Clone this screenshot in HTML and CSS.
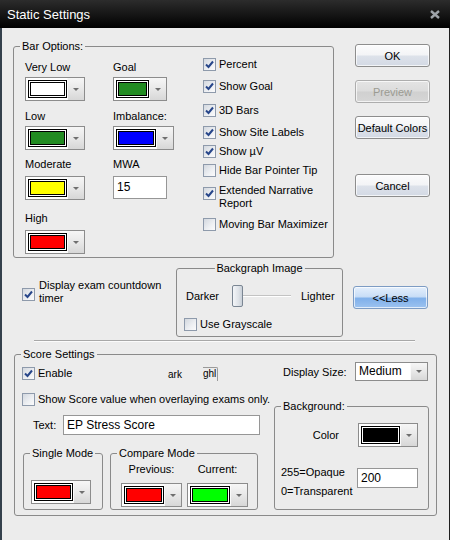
FILE: index.html
```html
<!DOCTYPE html>
<html>
<head>
<meta charset="utf-8">
<title>Static Settings</title>
<link rel="stylesheet" href="styles.css">
</head>
<body>
<div class="window">
  <div class="titlebar">
    <span class="title">Static Settings</span>
    <span class="close"><svg width="10" height="9" viewBox="0 0 10 9"><path d="M1 1L9 8M9 1L1 8" stroke="#9ea3a9" stroke-width="2.4" fill="none"/></svg></span>
  </div>
  <div class="client">
    <div class="row1">
      <div class="group bar-options">
        <span class="legend">Bar Options:</span>
        <div class="colors">
          <div class="field"><span class="lbl">Very Low</span><div class="combo w60"><span class="swatch c-white"></span><span class="drop"><i class="arrow"></i></span></div></div>
          <div class="field"><span class="lbl">Goal</span><div class="combo w54"><span class="swatch c-green"></span><span class="drop"><i class="arrow"></i></span></div></div>
          <div class="field"><span class="lbl">Low</span><div class="combo w60"><span class="swatch c-green"></span><span class="drop"><i class="arrow"></i></span></div></div>
          <div class="field"><span class="lbl">Imbalance:</span><div class="combo w61"><span class="swatch c-blue"></span><span class="drop"><i class="arrow"></i></span></div></div>
          <div class="field far"><span class="lbl">Moderate</span><div class="combo w60"><span class="swatch c-yellow"></span><span class="drop"><i class="arrow"></i></span></div></div>
          <div class="field far"><span class="lbl">MWA</span><div class="input mwa">15</div></div>
          <div class="field far"><span class="lbl">High</span><div class="combo w60"><span class="swatch c-red"></span><span class="drop"><i class="arrow"></i></span></div></div>
        </div>
        <div class="checks">
          <div class="check"><span class="cb"><svg width="11" height="11" viewBox="0 0 11 11"><path d="M2 5.5L4.5 8L9 2.5" stroke="#27468a" stroke-width="2" fill="none"/></svg></span><span>Percent</span></div>
          <div class="check"><span class="cb"><svg width="11" height="11" viewBox="0 0 11 11"><path d="M2 5.5L4.5 8L9 2.5" stroke="#27468a" stroke-width="2" fill="none"/></svg></span><span>Show Goal</span></div>
          <div class="check"><span class="cb"><svg width="11" height="11" viewBox="0 0 11 11"><path d="M2 5.5L4.5 8L9 2.5" stroke="#27468a" stroke-width="2" fill="none"/></svg></span><span>3D Bars</span></div>
          <div class="check"><span class="cb"><svg width="11" height="11" viewBox="0 0 11 11"><path d="M2 5.5L4.5 8L9 2.5" stroke="#27468a" stroke-width="2" fill="none"/></svg></span><span>Show Site Labels</span></div>
          <div class="check"><span class="cb"><svg width="11" height="11" viewBox="0 0 11 11"><path d="M2 5.5L4.5 8L9 2.5" stroke="#27468a" stroke-width="2" fill="none"/></svg></span><span>Show µV</span></div>
          <div class="check"><span class="cb"></span><span>Hide Bar Pointer Tip</span></div>
          <div class="check top"><span class="cb"><svg width="11" height="11" viewBox="0 0 11 11"><path d="M2 5.5L4.5 8L9 2.5" stroke="#27468a" stroke-width="2" fill="none"/></svg></span><span>Extended Narrative<br>Report</span></div>
          <div class="check"><span class="cb"></span><span>Moving Bar Maximizer</span></div>
        </div>
      </div>
      <div class="buttons">
        <div class="btn">OK</div>
        <div class="btn disabled">Preview</div>
        <div class="btn">Default Colors</div>
        <div class="btn cancel">Cancel</div>
      </div>
    </div>

    <div class="row2">
      <div class="countdown">
        <span class="cb"><svg width="11" height="11" viewBox="0 0 11 11"><path d="M2 5.5L4.5 8L9 2.5" stroke="#27468a" stroke-width="2" fill="none"/></svg></span>
        <span class="txt">Display exam countdown<br>timer</span>
      </div>
      <div class="group backgraph">
        <span class="legend center">Backgraph Image</span>
        <div class="slider-row">
          <span class="dark">Darker</span>
          <div class="slider"><span class="thumb"></span><span class="track"></span></div>
          <span class="light">Lighter</span>
        </div>
        <div class="gray-row"><span class="cb"></span><span>Use Grayscale</span></div>
      </div>
      <div class="btn less">&lt;&lt;Less</div>
    </div>

    <div class="separator"></div>

    <div class="group score">
      <span class="legend">Score Settings</span>
      <div class="score-left">
        <div class="enable-row">
          <span class="cb"><svg width="11" height="11" viewBox="0 0 11 11"><path d="M2 5.5L4.5 8L9 2.5" stroke="#27468a" stroke-width="2" fill="none"/></svg></span>
          <span class="enable-lbl">Enable</span>
          <span class="frag1">ark</span>
          <span class="frag2">ghl</span>
        </div>
        <div class="show-row"><span class="cb"></span><span>Show Score value when overlaying exams only.</span></div>
        <div class="text-row"><span class="text-lbl">Text:</span><div class="input text-input">EP Stress Score</div></div>
        <div class="modes">
          <div class="group single">
            <span class="legend">Single Mode</span>
            <div class="combo w60"><span class="swatch c-red"></span><span class="drop"><i class="arrow"></i></span></div>
          </div>
          <div class="group compare">
            <span class="legend">Compare Mode</span>
            <div class="col"><span class="lbl">Previous:</span><div class="combo w61"><span class="swatch c-red"></span><span class="drop"><i class="arrow"></i></span></div></div>
            <div class="col"><span class="lbl">Current:</span><div class="combo w61"><span class="swatch c-lime"></span><span class="drop"><i class="arrow"></i></span></div></div>
          </div>
        </div>
      </div>
      <div class="score-right">
        <div class="size-row">
          <span class="size-lbl">Display Size:</span>
          <div class="select"><span class="val">Medium</span><span class="drop"><i class="arrow"></i></span></div>
        </div>
        <div class="group background">
          <span class="legend">Background:</span>
          <div class="color-row">
            <span class="color-lbl">Color</span>
            <div class="combo w60"><span class="swatch c-black"></span><span class="drop"><i class="arrow"></i></span></div>
          </div>
          <div class="opacity-row">
            <div class="op-lbl">255=Opaque<br>0=Transparent</div>
            <div class="input op-input">200</div>
          </div>
        </div>
      </div>
    </div>
  </div>
</div>
</body>
</html>
```

FILE: styles.css
```css
* { box-sizing: border-box; }
html, body { margin: 0; padding: 0; }
body {
  width: 450px;
  height: 540px;
  overflow: hidden;
  font-family: "Liberation Sans", Arial, sans-serif;
  font-size: 11px;
  color: #000;
  background: #ececec;
}
.window {
  width: 450px;
  height: 540px;
  display: flex;
  flex-direction: column;
}
.titlebar {
  height: 28px;
  flex: none;
  display: flex;
  align-items: flex-start;
  background: linear-gradient(#2c2c2c, #141414 55%, #000);
  color: #fff;
}
.title {
  font-size: 13px;
  line-height: 22px;
  padding: 4px 0 0 7px;
}
.close {
  margin: 10px 10px 0 auto;
  display: flex;
}
.client {
  flex: 1;
  background: #ececec;
  border-left: 2px solid #35414c;
  border-right: 1px solid #1f1f1f;
  padding-left: 11px;
  display: flex;
  flex-direction: column;
  align-items: flex-start;
}

/* group boxes */
.group {
  position: relative;
  border: 1px solid #8a8a8a;
  border-radius: 3px;
}
.legend {
  position: absolute;
  top: -7px;
  left: 6px;
  padding: 0 2px;
  background: #ececec;
  line-height: 13px;
  white-space: nowrap;
}
.legend.center {
  left: 50%;
  transform: translateX(-50%);
}

/* row 1 */
.row1 {
  display: flex;
  align-items: flex-start;
  margin-top: 16px;
}
.bar-options {
  width: 321px;
  height: 212px;
  margin-top: 2px;
  padding: 11px 0 0 11px;
  display: flex;
  align-items: flex-start;
}
.colors {
  display: grid;
  grid-template-columns: 88px 90px;
  grid-template-rows: 49px 48px 54px auto;
  align-items: start;
  margin-top: 2px;
}
.field {
  display: flex;
  flex-direction: column;
  align-items: flex-start;
  gap: 3px;
}
.field.far { gap: 5px; }
.lbl {
  line-height: 14px;
  white-space: nowrap;
}

/* color combo */
.combo {
  display: flex;
  height: 24px;
  border: 1px solid #8c8c8c;
  background: #fff;
  flex: none;
}
.w54 { width: 54px; }
.w60 { width: 60px; }
.w61 { width: 61px; }
.swatch {
  flex: 1;
  margin: 2px 0 2px 2px;
  border: 1px solid #000;
  box-shadow: inset 0 0 0 1px #fff, inset 0 0 0 2px #000;
}
.c-white { background: #fff; }
.c-green { background: #228b22; }
.c-blue { background: #0000ff; }
.c-yellow { background: #ffff00; }
.c-red { background: #ff0000; }
.c-lime { background: #00ff00; }
.c-black { background: #000; }
.drop {
  width: 17px;
  flex: none;
  display: flex;
  align-items: center;
  justify-content: center;
  background: linear-gradient(#f6f6f6, #e8e8e8 50%, #d7d7d7);
  border-left: 1px solid #fafafa;
}
.arrow {
  width: 0;
  height: 0;
  border-left: 3px solid transparent;
  border-right: 3px solid transparent;
  border-top: 3px solid #6f6f6f;
}

.input {
  background: #fff;
  border: 1px solid #969696;
  white-space: nowrap;
}
.mwa {
  width: 54px;
  height: 23px;
  padding-left: 3px;
  line-height: 21px;
  font-size: 12px;
}

/* checkboxes */
.checks {
  display: grid;
  grid-template-rows: 22px 24px 22px 19px 19px 20px 34px 13px;
  align-items: start;
}
.check {
  display: flex;
  align-items: center;
  gap: 3px;
  line-height: 13px;
  white-space: nowrap;
}
.check.top { align-items: flex-start; }
.check.top .cb { margin-top: 3px; }
.cb {
  width: 13px;
  height: 13px;
  flex: none;
  border: 1px solid #8e9aab;
  background: linear-gradient(135deg, #d3d8df, #eef0f3 60%, #fbfbfc);
  display: flex;
  align-items: center;
  justify-content: center;
}
.cb svg { display: block; }

/* buttons */
.buttons {
  margin-left: 21px;
  display: flex;
  flex-direction: column;
}
.btn {
  width: 75px;
  height: 23px;
  flex: none;
  border: 1px solid #8d8d8d;
  border-radius: 3px;
  background: linear-gradient(#fbfbfc, #f3f4f6 48%, #dde2ea 52%, #d3d9e4);
  box-shadow: inset 0 0 0 1px rgba(255, 255, 255, 0.7);
  display: flex;
  align-items: center;
  justify-content: center;
  white-space: nowrap;
}
.buttons .btn + .btn { margin-top: 13px; }
.buttons .btn.cancel { margin-top: 35px; }
.btn.disabled {
  color: #9b9b92;
  border-color: #adadad;
  background: linear-gradient(#e4e4e4, #dcdcdc 48%, #d0d0d0 52%, #d6d6d6);
}
.btn.less {
  margin: 18px 0 0 10px;
  border-color: #7d9cc4;
  background: linear-gradient(#e4effc, #c9def7 45%, #80b0ea 55%, #9dc3f0);
}

/* row 2 */
.row2 {
  display: flex;
  align-items: flex-start;
  margin-top: 10px;
}
.countdown {
  margin: 11px 0 0 9px;
  width: 154px;
  display: flex;
  align-items: flex-start;
  gap: 4px;
}
.countdown .cb { margin-top: 9px; }
.countdown .txt { line-height: 13px; white-space: nowrap; }
.backgraph {
  width: 167px;
  height: 69px;
  padding: 16px 0 0 9px;
}
.slider-row {
  display: flex;
  align-items: center;
  height: 22px;
}
.dark { width: 46px; }
.slider {
  width: 59px;
  height: 22px;
  display: flex;
  align-items: center;
}
.thumb {
  width: 11px;
  height: 22px;
  flex: none;
  border: 1px solid #7b8693;
  border-radius: 2px;
  background: linear-gradient(90deg, #f3f5f8, #dfe3e8 60%, #c9d0d8);
}
.track {
  flex: 1;
  height: 2px;
  border-top: 1px solid #c3c3c3;
  border-bottom: 1px solid #fff;
}
.light { margin-left: 10px; }
.gray-row {
  margin: 11px 0 0 -2px;
  display: flex;
  align-items: center;
  gap: 3px;
  line-height: 13px;
}

.separator {
  margin: 3px 0 0 21px;
  width: 381px;
  height: 2px;
  border-top: 1px solid #a8a8a8;
  border-bottom: 1px solid #fbfbfb;
}

/* score settings */
.score {
  margin: 12px 0 0 1px;
  width: 423px;
  height: 162px;
  display: flex;
}
.score-left {
  width: 259px;
  padding-left: 7px;
  display: flex;
  flex-direction: column;
  align-items: flex-start;
}
.score-right {
  width: 155px;
  display: flex;
  flex-direction: column;
  align-items: flex-start;
}
.enable-row {
  margin-top: 11px;
  display: flex;
  align-items: center;
  gap: 3px;
  line-height: 13px;
  white-space: nowrap;
}
.enable-lbl { width: 127px; }
.frag1 { width: 32px; padding-top: 2px; font-size: 10px; }
.frag2 {
  height: 14px;
  padding-right: 1px;
  border-top: 1px solid #9a9a9a;
  border-right: 1px solid #9a9a9a;
  border-top-right-radius: 2px;
  line-height: 12px;
  font-size: 10px;
}
.show-row {
  margin-top: 12px;
  display: flex;
  align-items: center;
  gap: 3px;
  line-height: 13px;
  white-space: nowrap;
}
.text-row {
  margin-top: 9px;
  display: flex;
  align-items: center;
}
.text-lbl { margin-left: 11px; width: 30px; }
.text-input {
  width: 197px;
  height: 20px;
  padding-left: 3px;
  line-height: 18px;
  font-size: 12px;
}
.modes {
  margin-top: 18px;
  display: flex;
  align-items: flex-start;
}
.single {
  margin-left: 1px;
  width: 80px;
  height: 57px;
  padding: 26px 0 0 7px;
}
.compare {
  margin-left: 7px;
  width: 148px;
  height: 57px;
  padding: 8px 0 0 10px;
  display: flex;
  align-items: flex-start;
  gap: 5px;
}
.col {
  width: 61px;
  display: flex;
  flex-direction: column;
  align-items: center;
  gap: 7px;
}
.size-row {
  margin-top: 7px;
  display: flex;
  align-items: center;
}
.size-lbl { margin-left: 9px; width: 72px; white-space: nowrap; }
.select {
  width: 73px;
  height: 19px;
  display: flex;
  border: 1px solid #8c8c8c;
  background: #fff;
}
.select .val {
  flex: 1;
  padding-left: 3px;
  line-height: 17px;
  font-size: 12px;
}
.background {
  margin-top: 25px;
  width: 155px;
  height: 104px;
  padding-top: 16px;
}
.color-row {
  display: flex;
  align-items: center;
}
.color-lbl { width: 64px; text-align: right; }
.color-row .combo { margin-left: 19px; }
.opacity-row {
  margin-top: 16px;
  display: flex;
  align-items: flex-start;
}
.op-lbl {
  margin-left: 6px;
  width: 76px;
  line-height: 19px;
  white-space: nowrap;
}
.op-input {
  margin-top: 5px;
  width: 61px;
  height: 20px;
  padding-left: 3px;
  line-height: 18px;
  font-size: 12px;
}
```
